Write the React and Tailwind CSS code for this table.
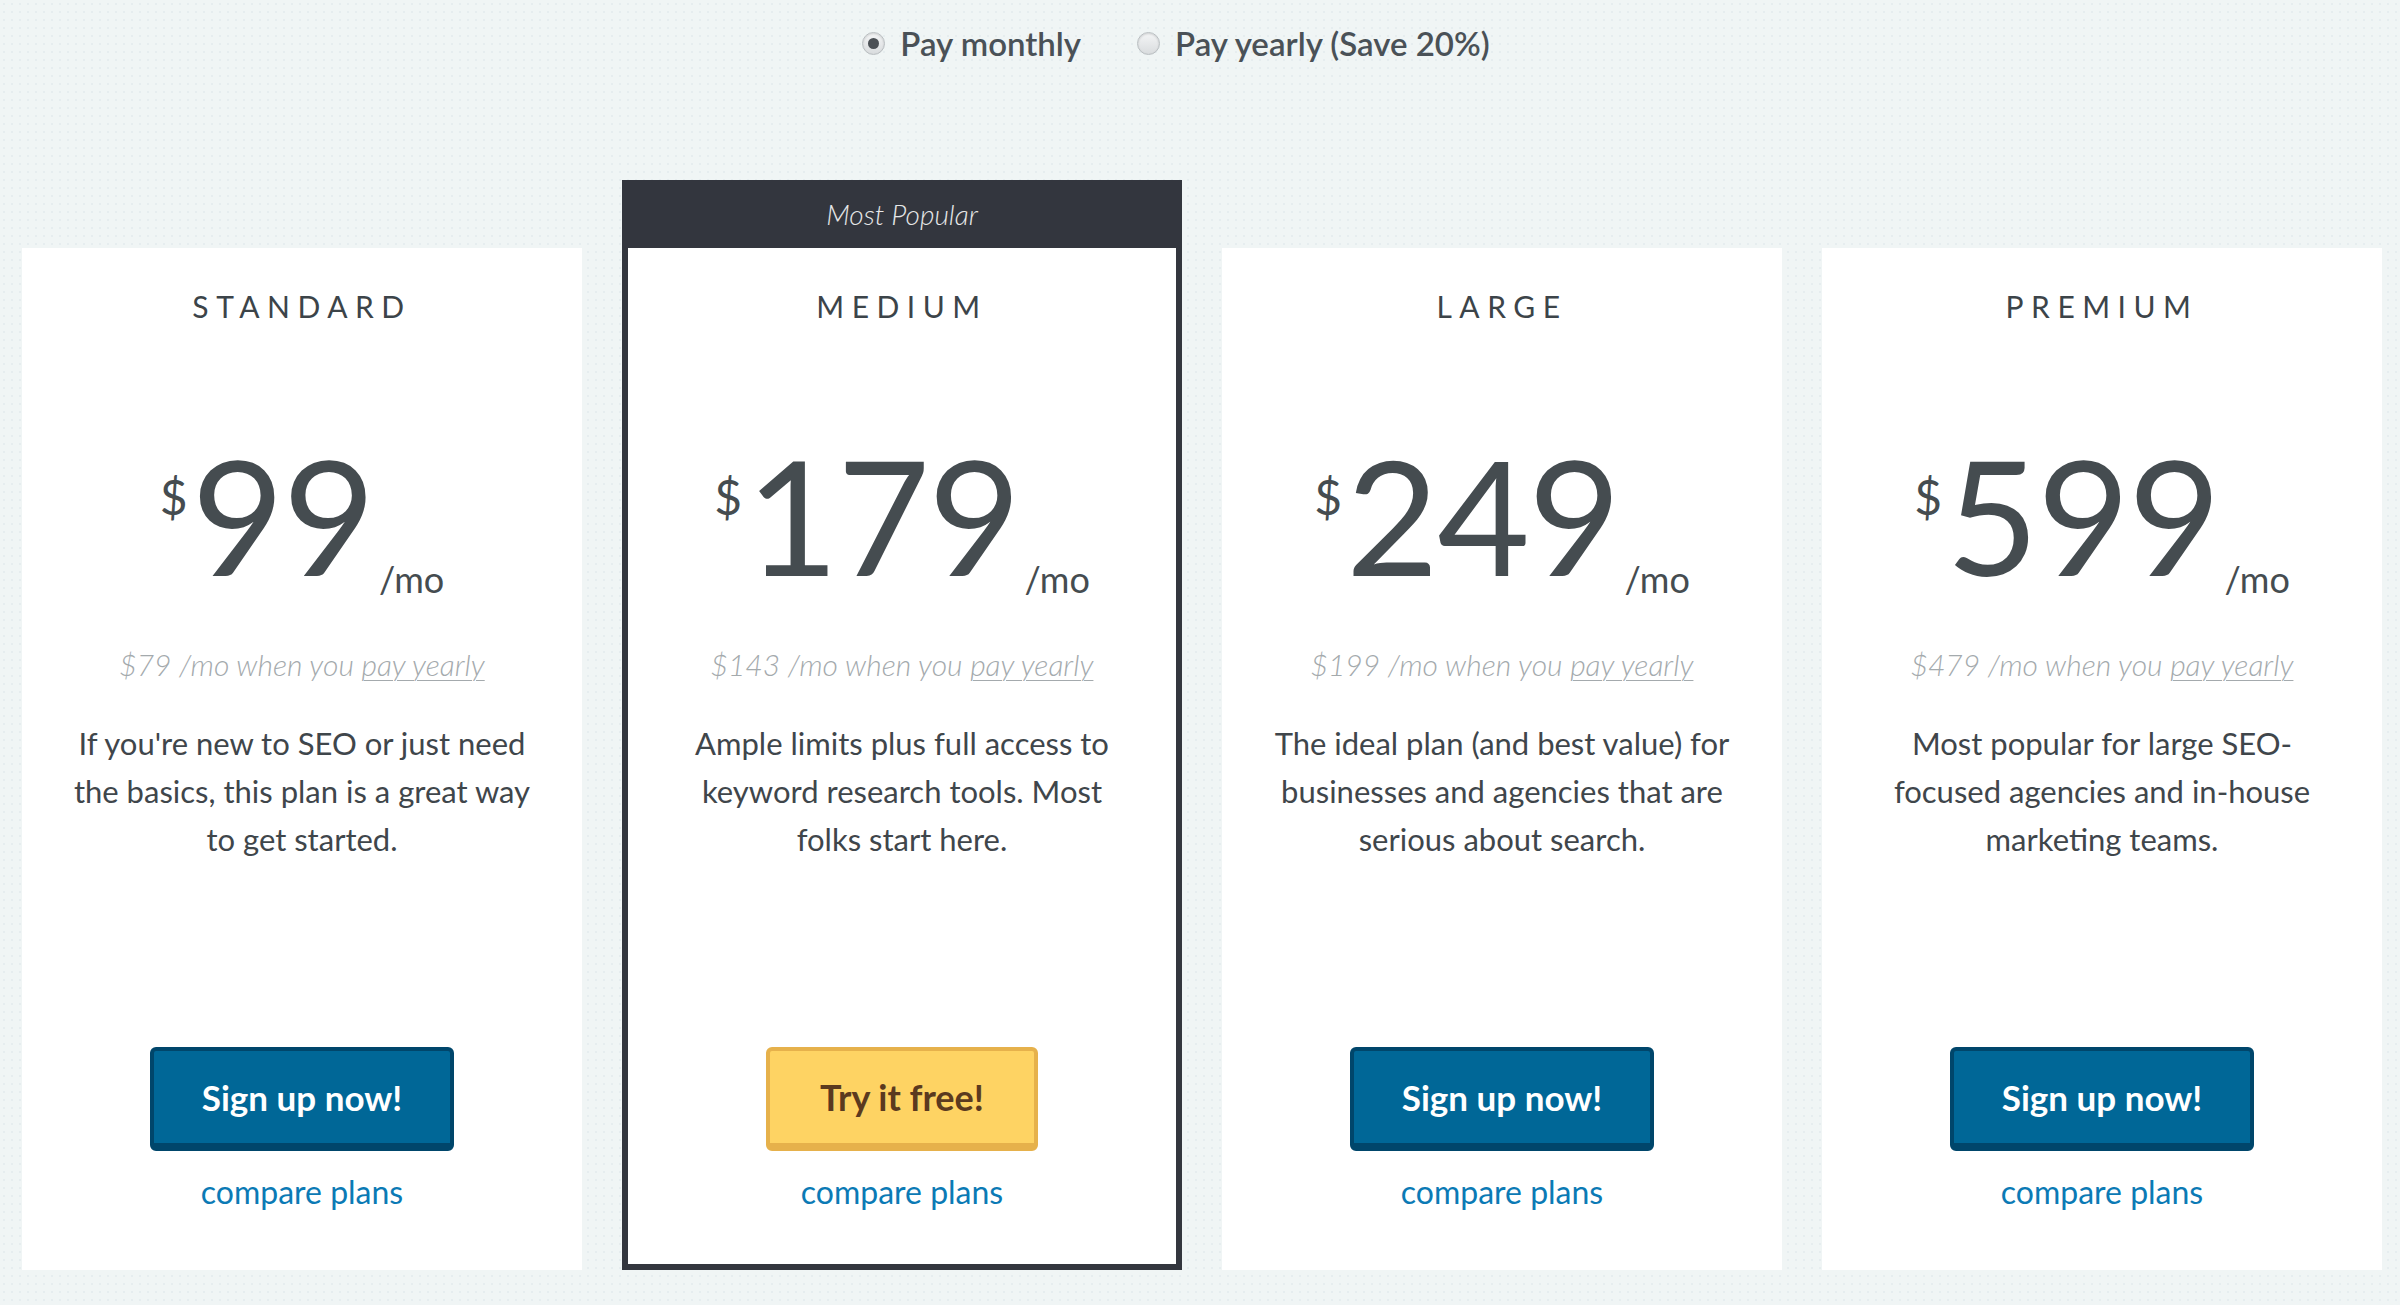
import React, { useState } from "react";

const plans = [
  {
    name: "STANDARD",
    price: "99",
    yearly: "$79",
    desc: "If you're new to SEO or just need the basics, this plan is a great way to get started.",
    cta: "Sign up now!",
  },
  {
    name: "MEDIUM",
    price: "179",
    yearly: "$143",
    desc: "Ample limits plus full access to keyword research tools. Most folks start here.",
    cta: "Try it free!",
    popular: true,
  },
  {
    name: "LARGE",
    price: "249",
    yearly: "$199",
    desc: "The ideal plan (and best value) for businesses and agencies that are serious about search.",
    cta: "Sign up now!",
  },
  {
    name: "PREMIUM",
    price: "599",
    yearly: "$479",
    desc: "Most popular for large SEO-focused agencies and in-house marketing teams.",
    cta: "Sign up now!",
  },
];

function Radio({ checked, label, onClick }) {
  return (
    <button
      type="button"
      onClick={onClick}
      className="flex items-center gap-[15px] focus:outline-none"
    >
      <span className="flex h-[23px] w-[23px] items-center justify-center rounded-full border border-[#b9bec1] bg-[linear-gradient(#f4f5f6,#d9dcde)] shadow-[inset_0_1px_2px_rgba(0,0,0,0.15)]">
        {checked && <span className="h-[11px] w-[11px] rounded-full bg-[#4b5055]" />}
      </span>
      <span className="text-[33px] font-semibold leading-none text-[#4a5157]">{label}</span>
    </button>
  );
}

function PlanBody({ plan }) {
  return (
    <div
      className={
        plan.popular
          ? "flex h-full flex-col items-center px-[42px] pt-[43px] pb-[56px] text-center"
          : "flex h-full flex-col items-center px-[42px] pt-[43px] pb-[62px] text-center"
      }
    >
      <h3 className="text-[30px] leading-none tracking-[0.25em] text-[#3c4449]">
        {plan.name}
      </h3>

      <div className="mt-[113px] flex items-end text-[#454c50]">
        <span className="mt-[39px] self-start text-[48px] leading-none">$</span>
        <span className="ml-[4px] text-[160px] leading-none tracking-[-0.01em]">{plan.price}</span>
        <span className="ml-[5px] translate-y-[3px] text-[36px] leading-none">/mo</span>
      </div>

      <p className="mt-[55px] text-[30px] font-light italic leading-none text-[#a4aaad]">
        {plan.yearly} /mo when you{" "}
        <a href="#" className="underline underline-offset-[4px] decoration-[1px]">
          pay yearly
        </a>
      </p>

      <p className="mt-[40px] text-[31px] leading-[48px] text-[#3f464b]">{plan.desc}</p>

      <div className="mt-auto flex flex-col items-center">
        {plan.popular ? (
          <button className="h-[104px] w-[272px] rounded-[6px] border-[4px] border-b-[8px] border-[#e6b14b] bg-[#fed363] text-[36px] font-bold text-[#5b3a1f]">
            {plan.cta}
          </button>
        ) : (
          <button className="h-[104px] w-[304px] rounded-[6px] border-[4px] border-b-[8px] border-[#00466b] bg-[#006797] text-[35px] font-bold text-white">
            {plan.cta}
          </button>
        )}
        <a href="#" className="mt-[25px] text-[32px] leading-none text-[#0b7ab5]">
          compare plans
        </a>
      </div>
    </div>
  );
}

export default function App() {
  const [billing, setBilling] = useState("monthly");

  return (
    <div className="min-h-[1305px] w-full bg-[#f0f5f5] bg-[radial-gradient(#e6edef_1px,transparent_1px)] bg-[length:8px_8px] font-['Lato',sans-serif]">
      <div className="flex justify-center gap-[56px] pt-[27px] pr-[48px]">
        <Radio
          checked={billing === "monthly"}
          label="Pay monthly"
          onClick={() => setBilling("monthly")}
        />
        <Radio
          checked={billing === "yearly"}
          label="Pay yearly (Save 20%)"
          onClick={() => setBilling("yearly")}
        />
      </div>

      <div className="mt-[120px] flex items-end gap-[40px] pl-[22px]">
        {plans.map((plan) =>
          plan.popular ? (
            <div key={plan.name} className="flex w-[560px] flex-col bg-[#33363e]">
              <div className="flex h-[68px] items-center justify-center text-[28px] font-light italic text-[#e6e7e8]">
                Most Popular
              </div>
              <div className="mx-[6px] mb-[6px] h-[1016px] bg-white">
                <PlanBody plan={plan} />
              </div>
            </div>
          ) : (
            <div key={plan.name} className="h-[1022px] w-[560px] bg-white">
              <PlanBody plan={plan} />
            </div>
          )
        )}
      </div>
    </div>
  );
}
